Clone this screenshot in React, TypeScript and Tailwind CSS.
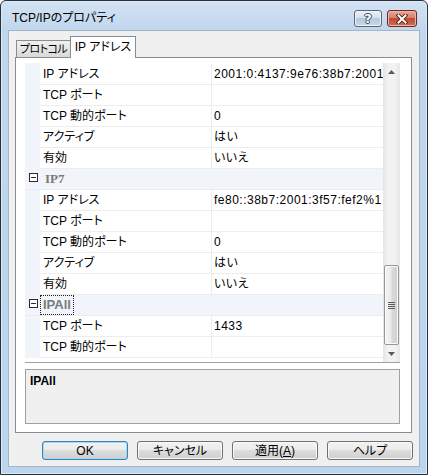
import React from 'react';

type PropRowT = { kind: 'prop'; label: string; value?: string };
type CatRowT = { kind: 'cat'; label: string; focus?: boolean; serif?: boolean };
type RowT = PropRowT | CatRowT;

const rows: RowT[] = [
  { kind: 'prop', label: 'IP アドレス', value: '2001:0:4137:9e76:38b7:2001' },
  { kind: 'prop', label: 'TCP ポート', value: '' },
  { kind: 'prop', label: 'TCP 動的ポート', value: '0' },
  { kind: 'prop', label: 'アクティブ', value: 'はい' },
  { kind: 'prop', label: '有効', value: 'いいえ' },
  { kind: 'cat', label: 'IP7', serif: true },
  { kind: 'prop', label: 'IP アドレス', value: 'fe80::38b7:2001:3f57:fef2%1' },
  { kind: 'prop', label: 'TCP ポート', value: '' },
  { kind: 'prop', label: 'TCP 動的ポート', value: '0' },
  { kind: 'prop', label: 'アクティブ', value: 'はい' },
  { kind: 'prop', label: '有効', value: 'いいえ' },
  { kind: 'cat', label: 'IPAll', focus: true },
  { kind: 'prop', label: 'TCP ポート', value: '1433' },
  { kind: 'prop', label: 'TCP 動的ポート', value: '' },
];

function PropRow({ r }: { r: PropRowT }) {
  return (
    <div className="flex h-[21px]">
      <div className="w-[15px] bg-[#f1f4fa]" />
      <div className="w-[172px] border-b border-r border-[#ededed] pl-[3px] leading-[20px] whitespace-nowrap overflow-hidden">
        {r.label}
      </div>
      <div className="flex-1 border-b border-[#ededed] pl-[2px] leading-[20px] whitespace-nowrap overflow-hidden tracking-[0.5px]">
        {r.value}
      </div>
    </div>
  );
}

function CatRow({ r }: { r: CatRowT }) {
  return (
    <div className="flex h-[21px] bg-[#f1f4fa] border-b border-[#e9edf3]">
      <div className="w-[15px] flex items-start">
        <div className="ml-[4px] mt-[4px] w-[9px] h-[9px] border border-[#2a2a2a] bg-white flex items-center justify-center">
          <div className="w-[5px] h-[1px] bg-[#2a2a2a]" />
        </div>
      </div>
      {r.focus ? (
        <div className="h-[20px] border border-dotted border-[#222] px-[2px] leading-[18px] text-[13px] font-bold text-[#7a7a7a]">
          {r.label}
        </div>
      ) : (
        <div className="h-[20px] pl-[5px] leading-[20px] text-[13px] font-bold text-[#7a7a7a] font-['Liberation_Serif',serif]">
          {r.label}
        </div>
      )}
    </div>
  );
}

function Scrollbar() {
  return (
    <div className="w-[17px] flex flex-col bg-[linear-gradient(to_right,#e4e4e4,#f2f2f2_30%,#f2f2f2_70%,#e6e6e6)]">
      <div className="h-[17px] flex items-center justify-center">
        <svg width="7" height="4" viewBox="0 0 7 4">
          <path d="M0 4 L3.5 0 L7 4 Z" fill="#5a5a5a" />
        </svg>
      </div>
      <div className="h-[185px]" />
      <div className="h-[80px] mx-[1px] rounded-[2px] border border-[#979797] bg-[linear-gradient(to_right,#f5f5f5,#e9e9e9_45%,#d9d9d9_55%,#cfcfcf)] shadow-[inset_0_0_0_1px_#fafafa] flex items-center justify-center">
        <div className="flex flex-col gap-[1px]">
          <div className="w-[7px] h-[1px] bg-[#5c5c5c]" />
          <div className="w-[7px] h-[1px] bg-[#5c5c5c]" />
          <div className="w-[7px] h-[1px] bg-[#5c5c5c]" />
          <div className="w-[7px] h-[1px] bg-[#5c5c5c]" />
        </div>
      </div>
      <div className="h-[17px] flex items-center justify-center">
        <svg width="7" height="4" viewBox="0 0 7 4">
          <path d="M0 0 L3.5 4 L7 0 Z" fill="#5a5a5a" />
        </svg>
      </div>
    </div>
  );
}

const btn =
  'w-[86px] h-[19px] rounded-[3px] border flex items-center justify-center text-[12px] leading-none bg-[linear-gradient(to_bottom,#f2f2f2_0%,#ebebeb_50%,#dddddd_50%,#cfcfcf_100%)]';

export default function App() {
  return (
    <div className="w-[428px] h-[475px] bg-white text-[12px] text-black font-['Liberation_Sans','Noto_Sans_CJK_JP',sans-serif] [font-feature-settings:'palt']">
      <div className="w-[428px] h-[475px] rounded-t-[6px] border border-[#27323e] bg-[linear-gradient(to_bottom,#d3e2f3,#c0d6ee_30px,#bcd5ee)] shadow-[inset_0_0_0_1px_#dce8f5] flex flex-col">
        {/* Title bar */}
        <div className="h-[29px] flex items-start">
          <div className="mt-[9px] pl-[11px] leading-[16px] text-[12px] text-black whitespace-nowrap">TCP/IPのプロパティ</div>
          <div className="ml-auto mt-[9px] mr-[10px] flex gap-[5px]">
            <div className="w-[28px] h-[17px] rounded-[3px] border border-[#56657a] bg-[linear-gradient(to_bottom,#eaf1f8,#d5e1ee_45%,#b8c9de_50%,#c9d8e8)] shadow-[inset_0_0_0_1px_#eef3f9] flex items-center justify-center">
              <span className="text-white font-bold text-[13px] leading-none font-['DejaVu_Sans',sans-serif] [text-shadow:1px_0_#3b4a5e,-1px_0_#3b4a5e,0_1px_#3b4a5e,0_-1px_#3b4a5e]">
                ?
              </span>
            </div>
            <div className="w-[30px] h-[17px] rounded-[3px] border border-[#6e2a20] bg-[linear-gradient(to_bottom,#eaa799,#d5806c_45%,#c24b34_50%,#d06c55)] shadow-[inset_0_0_0_1px_#eeb4a7] flex items-center justify-center">
              <svg width="14" height="10" viewBox="0 0 14 10">
                <path d="M3.5 1.5 L10.5 8.5 M10.5 1.5 L3.5 8.5" stroke="#4a1c14" strokeWidth="3.8" strokeLinecap="square" />
                <path d="M3.5 1.5 L10.5 8.5 M10.5 1.5 L3.5 8.5" stroke="#ffffff" strokeWidth="2" strokeLinecap="square" />
              </svg>
            </div>
          </div>
        </div>

        {/* Client */}
        <div className="mx-[7px] h-[437px] bg-[#f0f0f0] border border-[#a3b5c9] flex flex-col">
          {/* Tabs */}
          <div className="h-[26px] flex items-end pl-[7px]">
            <div className="w-[54px] h-[17px] border-l border-t border-[#898c95] bg-[linear-gradient(to_bottom,#f0f0f0,#d9d9d9)] flex items-center justify-center leading-none whitespace-nowrap text-[11px] tracking-[-0.6px] overflow-hidden">
              プロトコル
            </div>
            <div className="relative z-10 w-[66px] h-[22px] mb-[-1px] border-l border-t border-r border-[#898c95] bg-white flex items-center justify-center leading-none pb-[1px] whitespace-nowrap">
              IP アドレス
            </div>
          </div>

          {/* Panel */}
          <div className="ml-[6px] w-[397px] h-[376px] border border-[#898c95] bg-white pl-[9px] pt-[5px] flex flex-col">
            <div className="flex w-[375px] h-[300px] border-b border-[#a0a0a0]">
              <div className="flex flex-col w-[358px]">
                <div className="h-[1px] flex">
                  <div className="w-[15px] bg-[#f1f4fa]" />
                </div>
                {rows.map((r, i) =>
                  r.kind === 'prop' ? <PropRow key={i} r={r} /> : <CatRow key={i} r={r} />
                )}
                <div className="flex-1" />
              </div>
              <Scrollbar />
            </div>
            <div className="mt-[6px] w-[375px] h-[55px] border border-[#a0a0a0] bg-[#f0f0f0] pl-[4px] pt-[3px] font-bold text-[12px] leading-[16px]">
              IPAll
            </div>
          </div>

          {/* Buttons */}
          <div className="mt-[8px] pl-[33px] flex gap-[9px]">
            <div className={`${btn} border-[#3c7fb1] shadow-[inset_0_0_0_1px_#9fdcf7]`}>OK</div>
            <div className={`${btn} border-[#707070] shadow-[inset_0_0_0_1px_#f8f8f8]`}>キャンセル</div>
            <div className={`${btn} border-[#707070] shadow-[inset_0_0_0_1px_#f8f8f8]`}>
              適用(<span className="underline">A</span>)
            </div>
            <div className={`${btn} border-[#707070] shadow-[inset_0_0_0_1px_#f8f8f8]`}>ヘルプ</div>
          </div>
        </div>
      </div>
    </div>
  );
}
